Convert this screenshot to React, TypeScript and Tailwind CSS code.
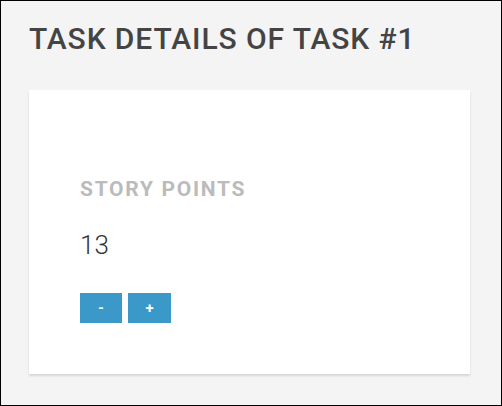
import { useState } from "react";

export default function App() {
  const [points, setPoints] = useState(13);

  return (
    <div
      className="h-[406px] w-[502px] bg-[#f4f4f4] border border-black px-[28px] pt-[21px]"
      style={{ fontFamily: "Roboto, sans-serif" }}
    >
      <h1 className="text-[30px] font-medium text-[#444444] leading-[34px] tracking-[0.9px]">
        TASK DETAILS OF TASK #1
      </h1>
      <div className="mt-[34px] w-[441px] h-[284px] bg-white shadow-[0_2px_2px_rgba(0,0,0,0.12)] px-[51px] pt-[87px]">
        <h2 className="text-[21px] font-bold text-[#bbbbbb] leading-[24px] tracking-[1.7px]">
          STORY POINTS
        </h2>
        <div className="mt-[28px] text-[26px] font-light text-[#333333] leading-[32px]">
          {points}
        </div>
        <div className="mt-[32px] flex gap-[6px]">
          <button
            className="w-[42px] h-[30px] bg-[#3a99c8] text-white text-[14px] font-bold"
            onClick={() => setPoints(points - 1)}
          >
            -
          </button>
          <button
            className="w-[43px] h-[30px] bg-[#3a99c8] text-white text-[15px] font-bold"
            onClick={() => setPoints(points + 1)}
          >
            +
          </button>
        </div>
      </div>
    </div>
  );
}
